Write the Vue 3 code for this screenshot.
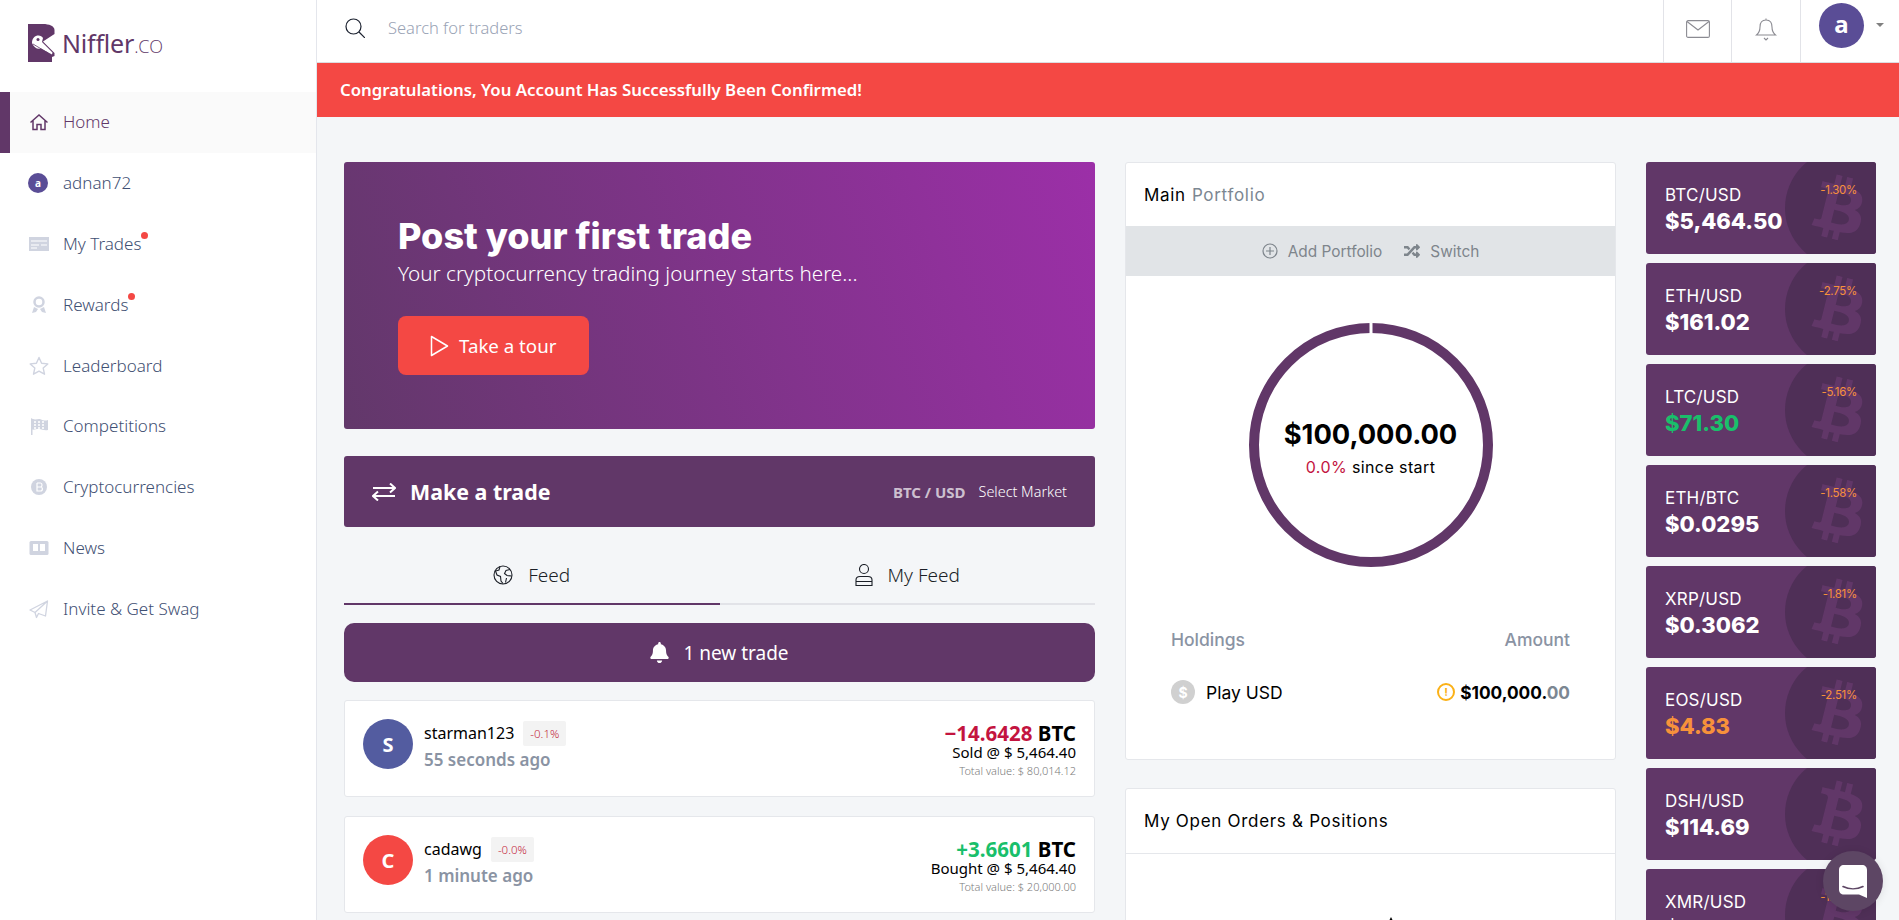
<template>
  <div class="page">
    <aside class="sidebar">
      <div class="logo">
        <svg class="logo-mark" viewBox="0 0 27 38" width="27" height="38">
          <path fill="#613768" d="M0 0H15C21 0 26.500 2 26.500 6V10L15 17.500L26.500 29V32L24 33V38H0Z" />
          <path fill="#fff" d="M4 19C4 14 7 11.500 10.500 11.500C12.500 11.500 14 12.500 15 14L14 18L24.500 28.500L24 30.500L13 24.500C9 25.500 6 23.500 4 19Z" />
          <circle cx="10" cy="15.500" r="1.500" fill="#613768" />
          <path stroke="#613768" stroke-width="0.800" fill="none" d="M5 20L20 29" />
        </svg>
        <span class="logo-name">Niffler<span class="logo-co">.CO</span></span>
      </div>
      <nav class="nav">
        <a v-for="item in nav" :key="item.label" class="nav-item" :class="{ active: item.active }">
          <span class="nav-icon">
            <span v-if="item.icon === 'avatar'" class="nav-avatar">a</span>
            <svg v-else viewBox="0 0 20 20" width="20" height="20" v-html="navIcons[item.icon]"></svg>
          </span>
          <span class="nav-label">{{ item.label }}<i v-if="item.dot" class="dot"></i></span>
        </a>
      </nav>
    </aside>

    <div class="main">
      <header class="topbar">
        <svg class="search-icon" viewBox="0 0 20 20" width="20" height="20" fill="none" stroke="#1c2230" stroke-width="1.200">
          <circle cx="8.500" cy="8.500" r="7.500" />
          <path d="M14 14L20 20" />
        </svg>
        <span class="search-text">Search for traders</span>
        <div class="top-cell">
          <svg viewBox="0 0 24 18" width="24" height="18" fill="none" stroke="#8b8b92" stroke-width="1.100">
            <rect x="0.600" y="0.600" width="22.800" height="16.800" rx="1.500" />
            <path d="M1 1.500L12 10L23 1.500" />
          </svg>
        </div>
        <div class="top-cell wide">
          <svg viewBox="0 0 22 24" width="22" height="24" fill="none" stroke="#8b8b92" stroke-width="1.100">
            <path d="M11 1.500V3M11 3C6.500 3 5 6.500 5 10C5 14 4 16 1.500 18H20.500C18 16 17 14 17 10C17 6.500 15.500 3 11 3Z" />
            <path d="M9 21L11 23L13 21" />
          </svg>
        </div>
        <div class="top-user">
          <span class="top-avatar">a</span>
          <i class="caret"></i>
        </div>
      </header>
      <div class="alert">Congratulations, You Account Has Successfully Been Confirmed!</div>

      <div class="content">
        <section class="col-feed">
          <div class="hero">
            <h1>Post your first trade</h1>
            <p>Your cryptocurrency trading journey starts here...</p>
            <button class="tour-btn">
              <svg viewBox="0 0 19 22" width="19" height="22" fill="none" stroke="#fff" stroke-width="1.500" stroke-linejoin="round">
                <path d="M1.500 1.500L17.500 11L1.500 20.500Z" />
              </svg>
              Take a tour
            </button>
          </div>

          <div class="trade-bar">
            <svg viewBox="0 0 24 18" width="24" height="18" fill="none" stroke="#fff" stroke-width="2">
              <path d="M1 5H23M18 0.500L23 5L18 9.500" />
              <path d="M23 13H1M6 8.500L1 13L6 17.500" />
            </svg>
            <span class="trade-title">Make a trade</span>
            <span class="trade-pair">BTC / USD</span>
            <span class="trade-select">Select Market</span>
          </div>

          <div class="tabs">
            <div class="tab active">
              <svg viewBox="0 0 20 20" width="20" height="20" fill="none" stroke="#1b1f27" stroke-width="1.100">
                <circle cx="10" cy="10" r="9" />
                <path d="M7 1.500L6 5L2.500 6L4 10L7.500 11.500L8 16L10 18.500M17 4.500L13 5.500L11.500 8.500L14 10.500L18.500 11M13.500 13L12.500 17.500" />
              </svg>
              Feed
            </div>
            <div class="tab">
              <svg viewBox="0 0 18 22" width="18" height="22" fill="none" stroke="#1b1f27" stroke-width="1.100">
                <circle cx="9" cy="5" r="4.500" />
                <path d="M1 21.500V16C1 13.500 2.500 12.500 5 12.500H13C15.500 12.500 17 13.500 17 16V21.500ZM1 17.500H17" />
              </svg>
              My Feed
            </div>
          </div>

          <button class="new-trade">
            <svg viewBox="0 0 448 512" width="19" height="21" fill="#fff">
              <path d="M224 512c35.300 0 64-28.700 64-64H160c0 35.300 28.700 64 64 64zm215.400-149.700c-19.300-20.800-55.500-52-55.500-154.300 0-77.700-54.500-139.900-127.900-155.200V32c0-17.700-14.300-32-32-32s-32 14.300-32 32v20.800C118.600 68.100 64.100 130.300 64.100 208c0 102.300-36.200 133.500-55.500 154.300-6 6.400-8.600 14.100-8.600 21.700 .1 16.400 13 32 32.100 32h383.800c19.100 0 32-15.600 32.100-32 .1-7.600-2.600-15.300-8.600-21.700z" />
            </svg>
            1 new trade
          </button>

          <article v-for="t in trades" :key="t.user" class="trade-card">
            <span class="trade-avatar" :class="t.tone">{{ t.initial }}</span>
            <div class="trade-who">
              <div class="trade-user">
                <span>{{ t.user }}</span>
                <span class="trade-change">{{ t.change }}</span>
              </div>
              <div class="trade-time">{{ t.time }}</div>
            </div>
            <div class="trade-values">
              <div class="trade-amount"><span :class="t.side">{{ t.amount }}</span> BTC</div>
              <div class="trade-price">{{ t.action }} @ $ 5,464.40</div>
              <div class="trade-total">Total value: $ {{ t.total }}</div>
            </div>
          </article>
        </section>

        <section class="col-portfolio">
          <div class="card">
            <div class="card-title">Main <span class="muted">Portfolio</span></div>
            <div class="card-band">
              <span class="band-link">
                <svg viewBox="0 0 16 16" width="16" height="16" fill="none" stroke="#7e858c" stroke-width="1.200">
                  <circle cx="8" cy="8" r="7" />
                  <path d="M8 4V12M4 8H12" />
                </svg>
                Add Portfolio
              </span>
              <span class="band-link">
                <svg viewBox="0 0 512 512" width="16" height="16" fill="#7e858c">
                  <path d="M504.971 359.029c9.373 9.373 9.373 24.569 0 33.941l-80 79.984c-15.010 15.010-40.971 4.490-40.971-16.971V416h-58.785a12.004 12.004 0 0 1-8.773-3.812l-70.556-75.596 53.333-57.143L352 336h32v-39.981c0-21.438 25.943-31.998 40.971-16.971l80 79.981zM12 176h84l52.781 56.551 53.333-57.143-70.556-75.596A11.999 11.999 0 0 0 122.785 96H12c-6.627 0-12 5.373-12 12v56c0 6.627 5.373 12 12 12zm372 0v39.984c0 21.460 25.961 31.980 40.971 16.971l80-79.984c9.373-9.373 9.373-24.569 0-33.941l-80-79.981C409.943 24.021 384 34.582 384 56.019V96h-58.785a12.004 12.004 0 0 0-8.773 3.812L96 336H12c-6.627 0-12 5.373-12 12v56c0 6.627 5.373 12 12 12h110.785c3.326 0 6.503-1.381 8.773-3.812L352 176h32z" />
                </svg>
                Switch
              </span>
            </div>

            <div class="ring-wrap">
              <svg class="ring" viewBox="0 0 244 244" width="244" height="244">
                <circle cx="122" cy="122" r="117" fill="none" stroke="#613768" stroke-width="10" />
                <rect x="120.500" y="0" width="3" height="12" fill="#fff" />
              </svg>
              <div class="ring-text">
                <div class="ring-value">$100,000.00</div>
                <div class="ring-sub"><span class="loss">0.0%</span> since start</div>
              </div>
            </div>

            <div class="holdings">
              <div class="holdings-head"><span>Holdings</span><span>Amount</span></div>
              <div class="holdings-row">
                <span class="coin">$</span>
                <span class="holdings-name">Play USD</span>
                <span class="warn">!</span>
                <span class="holdings-amount">$100,000.<span class="muted">00</span></span>
              </div>
            </div>
          </div>

          <div class="card">
            <div class="card-title bordered">My Open Orders &amp; Positions</div>
            <div class="card-empty">
              <svg viewBox="0 0 10 10" width="10" height="10" fill="#000"><path d="M5 0L10 10H0Z" /></svg>
            </div>
          </div>
        </section>

        <section class="col-tickers">
          <div v-for="c in tickers" :key="c.pair" class="ticker">
            <span class="ticker-circle"></span>
            <svg class="ticker-btc" viewBox="0 0 384 512" width="48" height="64" fill="#613768">
              <path d="M310.204 242.638c27.730-14.180 45.377-39.390 41.280-81.300-5.358-57.351-52.458-76.573-114.850-81.929V0h-48.528v77.203c-12.605 0-25.525.315-38.444.63V0h-48.528v79.409c-17.842.539-38.622.276-97.370 0v51.678c38.314-.678 58.417-3.140 63.023 21.427v217.429c-2.925 19.492-18.524 16.685-53.255 16.071L3.765 443.680c88.481 0 97.370.315 97.370.315V512h48.528v-67.060c13.234.315 26.154.315 38.444.315V512h48.528v-68.005c81.299-4.412 135.647-24.894 142.895-101.467 5.671-61.446-23.320-88.862-69.326-99.890zM150.608 134.553c27.415 0 113.126-8.507 113.126 48.528 0 54.515-85.710 48.212-113.126 48.212v-96.740zm0 251.776V279.821c32.772 0 133.127-9.138 133.127 53.255-.001 60.200-100.355 53.253-133.127 53.253z" />
            </svg>
            <span v-if="c.pct" class="ticker-pct">{{ c.pct }}</span>
            <div class="ticker-pair">{{ c.pair }}</div>
            <div class="ticker-price" :class="c.tone">{{ c.price }}</div>
          </div>
        </section>
      </div>
    </div>

    <button class="chat">
      <svg viewBox="0 0 28 33" width="28" height="33">
        <path fill="#fff" d="M5 0H23C26 0 28 2 28 5V33L20 29.500H5C2 29.500 0 27.500 0 24.500V5C0 2 2 0 5 0Z" />
        <path fill="none" stroke="#5d4664" stroke-width="1.600" stroke-linecap="round" d="M4 21.500C10 24.500 18 24.500 24 21.500" />
      </svg>
    </button>
  </div>
</template>

<script setup>
const navIcons = {
  home: '<path fill="none" stroke="#613768" stroke-width="1.500" d="M1.500 10.500L10 3L18.500 10.500M4 8.500V17.500H8V12.500H12V17.500H16V8.500" />',
  trades: '<rect x="0" y="3" width="20" height="14" fill="#d0d4e0" /><path stroke="#fff" stroke-width="1.200" d="M2 7H18M2 11H10M12 11H18M2 14H8" />',
  rewards: '<circle cx="10" cy="7" r="4.500" fill="none" stroke="#d0d4e0" stroke-width="2.500" /><path fill="#d0d4e0" d="M5 12L3 18L7 17L9 14ZM15 12L17 18L13 17L11 14Z" />',
  star: '<path fill="none" stroke="#d0d4e0" stroke-width="1.400" stroke-linejoin="round" d="M10 1.500L12.600 7.200L18.800 7.900L14.200 12.100L15.500 18.200L10 15.100L4.500 18.200L5.800 12.100L1.200 7.900L7.400 7.200Z" />',
  flag: '<path fill="#d0d4e0" d="M2 2C6 5 9 2 12 3.500C14 4.500 16 5 19 4V14C15 15 13 13 10 13C7 13 5 14 3.500 13.500V19H2Z" /><path stroke="#fff" stroke-width="1.500" stroke-dasharray="2 2" d="M5 6H17M5 9H17M5 12H17" />',
  coin: '<circle cx="10" cy="10" r="8" fill="#d0d4e0" /><path stroke="#fff" stroke-width="1.200" fill="none" d="M8 6H11.500C13.500 6 13.500 10 11.500 10H8M11.500 10C14 10 14 14 11.500 14H8V6" />',
  news: '<rect x="0.500" y="3" width="19" height="14" rx="1.500" fill="#d0d4e0" /><rect x="4" y="6" width="5" height="7" fill="#fff" /><rect x="11" y="6" width="5" height="7" fill="#fff" />',
  plane: '<path fill="none" stroke="#d0d4e0" stroke-width="1.300" stroke-linejoin="round" d="M18.500 2L1 11L6 13.500L18.500 2ZM18.500 2L16.500 17L9.500 14.500L7.500 18.500L6 13.500" />',
};

const nav = [
  { label: "Home", icon: "home", active: true },
  { label: "adnan72", icon: "avatar" },
  { label: "My Trades", icon: "trades", dot: true },
  { label: "Rewards", icon: "rewards", dot: true },
  { label: "Leaderboard", icon: "star" },
  { label: "Competitions", icon: "flag" },
  { label: "Cryptocurrencies", icon: "coin" },
  { label: "News", icon: "news" },
  { label: "Invite & Get Swag", icon: "plane" },
];

const trades = [
  { user: "starman123", initial: "S", tone: "blue", change: "-0.1%", time: "55 seconds ago", amount: "−14.6428", side: "loss", action: "Sold", total: "80,014.12" },
  { user: "cadawg", initial: "C", tone: "red", change: "-0.0%", time: "1 minute ago", amount: "+3.6601", side: "gain", action: "Bought", total: "20,000.00" },
];

const tickers = [
  { pair: "BTC/USD", price: "$5,464.50", pct: "-1.30%" },
  { pair: "ETH/USD", price: "$161.02", pct: "-2.75%" },
  { pair: "LTC/USD", price: "$71.30", pct: "-5.16%", tone: "gain" },
  { pair: "ETH/BTC", price: "$0.0295", pct: "-1.58%" },
  { pair: "XRP/USD", price: "$0.3062", pct: "-1.81%" },
  { pair: "EOS/USD", price: "$4.83", pct: "-2.51%", tone: "warm" },
  { pair: "DSH/USD", price: "$114.69" },
  { pair: "XMR/USD", price: "$66.307", pct: "-1.60%" },
];
</script>

<style>
html,
body {
  margin: 0;
  height: 100%;
  overflow: hidden;
}
</style>

<style scoped>
.page {
  display: flex;
  height: 920px;
  overflow: hidden;
  background: #f4f6f8;
  font-family: "Noto Sans", sans-serif;
  color: #000;
}

.sidebar {
  width: 316px;
  flex: none;
  background: #fff;
  border-right: 1px solid #e4e6ec;
}

.logo {
  display: flex;
  align-items: center;
  gap: 7px;
  height: 92px;
  padding: 0 0 6px 28px;
  box-sizing: border-box;
}

.logo-name {
  font-size: 25px;
  color: #613768;
  letter-spacing: -0.2px;
}

.logo-co {
  font-size: 18px;
  font-weight: 300;
  font-family: "Open Sans", sans-serif;
}

.nav-item {
  display: flex;
  align-items: center;
  height: 60.800px;
  padding-left: 28px;
  color: #3f5073;
  font-size: 17px;
  font-weight: 300;
  box-sizing: border-box;
}

.nav-item.active {
  background: #fafafa;
  border-left: 10px solid #613768;
  padding-left: 18px;
  color: #613768;
}

.nav-icon {
  width: 34px;
  display: flex;
  padding-left: 1px;
}

.nav-avatar {
  width: 20px;
  height: 20px;
  border-radius: 50%;
  background: #5a4d96;
  color: #fff;
  font-size: 10px;
  font-weight: 700;
  display: flex;
  align-items: center;
  justify-content: center;
  margin-left: -1px;
}

.nav-label {
  position: relative;
  margin-top: -1px;
}

.dot {
  position: absolute;
  right: -7px;
  top: 0;
  width: 7px;
  height: 7px;
  border-radius: 50%;
  background: #f44844;
}

.main {
  flex: 1;
  min-width: 0;
}

.topbar {
  display: flex;
  align-items: center;
  height: 62px;
  background: #fff;
  border-bottom: 1px solid #dcdde0;
  padding-left: 28px;
}

.search-icon {
  flex: none;
  margin-bottom: 6px;
}

.search-text {
  flex: 1;
  margin: 0 0 8px 23px;
  font-size: 16.500px;
  color: #9aa3b5;
  font-weight: 300;
}

.top-cell {
  width: 68px;
  height: 62px;
  border-left: 1px solid #e2e3e8;
  display: flex;
  align-items: center;
  justify-content: center;
  padding-bottom: 4px;
  box-sizing: border-box;
}

.top-cell.wide {
  width: 69px;
}

.top-user {
  width: 99px;
  height: 62px;
  border-left: 1px solid #e2e3e8;
  display: flex;
  align-items: center;
  padding-left: 18px;
  padding-bottom: 12px;
  box-sizing: border-box;
}

.top-avatar {
  width: 45px;
  height: 45px;
  border-radius: 50%;
  background: #5a4d96;
  color: #fff;
  font-size: 24px;
  font-weight: 700;
  display: flex;
  align-items: center;
  justify-content: center;
  padding-bottom: 3px;
  box-sizing: border-box;
}

.caret {
  margin-left: 12px;
  border-left: 4px solid transparent;
  border-right: 4px solid transparent;
  border-top: 4px solid #808080;
}

.alert {
  height: 54px;
  background: #f44844;
  color: #fff;
  font-size: 16.800px;
  font-weight: 600;
  display: flex;
  align-items: center;
  padding: 0 0 2px 23px;
  box-sizing: border-box;
}

.content {
  display: flex;
  gap: 30px;
  padding: 45px 23px 0 27px;
  align-items: flex-start;
}

.col-feed {
  width: 751px;
  flex: none;
  display: flex;
  flex-direction: column;
}

.hero {
  height: 267px;
  border-radius: 3px;
  background: linear-gradient(70deg, #62386a 0%, #9c2fa8 100%);
  padding: 55px 0 0 54px;
  box-sizing: border-box;
  color: #fff;
}

.hero h1 {
  margin: 0;
  font-family: Inter, sans-serif;
  font-size: 36px;
  font-weight: 800;
  line-height: 38px;
}

.hero p {
  margin: 0;
  font-size: 20.700px;
  font-weight: 300;
  line-height: 36px;
}

.tour-btn {
  display: flex;
  align-items: center;
  gap: 10px;
  margin-top: 25px;
  width: 191px;
  height: 59px;
  padding: 0 0 0 32px;
  border: 0;
  border-radius: 8px;
  background: #f44844;
  color: #fff;
  font-family: inherit;
  font-size: 18.700px;
}

.trade-bar {
  display: flex;
  align-items: center;
  height: 71px;
  margin-top: 27px;
  padding: 0 28px 0 28px;
  background: #613768;
  border-radius: 3px;
  color: #fff;
}

.trade-title {
  flex: 1;
  margin-left: 14px;
  font-size: 21.400px;
  font-weight: 700;
}

.trade-pair {
  font-size: 15px;
  font-weight: 700;
  color: rgba(255, 255, 255, 0.7);
  margin-right: 13px;
}

.trade-select {
  font-size: 14.400px;
  font-weight: 300;
}

.tabs {
  display: flex;
  height: 78px;
}

.tab {
  flex: 1;
  display: flex;
  align-items: center;
  justify-content: center;
  gap: 15px;
  padding-top: 20px;
  font-size: 19px;
  font-weight: 300;
  color: #1b1f27;
  border-bottom: 2px solid #e2e3e8;
  box-sizing: border-box;
}

.tab.active {
  border-bottom-color: #613768;
}

.new-trade {
  display: flex;
  align-items: center;
  justify-content: center;
  gap: 14px;
  height: 59px;
  margin-top: 18px;
  border: 0;
  border-radius: 10px;
  background: #613768;
  color: #fff;
  font-family: inherit;
  font-size: 19px;
}

.trade-card {
  display: flex;
  align-items: center;
  height: 97px;
  margin-top: 18px;
  padding: 0 18px 0 18px;
  background: #fff;
  border: 1px solid #e5e7eb;
  border-radius: 3px;
  box-sizing: border-box;
}

.trade-card + .trade-card {
  margin-top: 19px;
}

.trade-avatar {
  width: 50px;
  height: 50px;
  flex: none;
  border-radius: 50%;
  margin-bottom: 9px;
  color: #fff;
  font-size: 20px;
  font-weight: 700;
  display: flex;
  align-items: center;
  justify-content: center;
}

.trade-avatar.blue {
  background: #535ca0;
}

.trade-avatar.red {
  background: #f44844;
}

.trade-who {
  flex: 1;
  margin: 0 0 6px 11px;
}

.trade-user {
  display: flex;
  align-items: center;
  gap: 9px;
  font-size: 16px;
}

.trade-change {
  background: #f3f3f3;
  color: #c4293d;
  font-size: 11.500px;
  font-weight: 300;
  height: 25px;
  line-height: 25px;
  padding: 0 7px;
  border-radius: 2px;
}

.trade-time {
  margin-top: 2px;
  font-size: 17px;
  font-weight: 600;
  color: #8a93a3;
}

.trade-values {
  text-align: right;
  margin-top: 5px;
}

.trade-amount {
  font-size: 20.500px;
  font-weight: 700;
  line-height: 20px;
}

.trade-price {
  font-size: 15px;
  line-height: 18px;
}

.trade-total {
  font-size: 11px;
  font-weight: 300;
  color: #7b7b7b;
  line-height: 19px;
}

.loss {
  color: #c3143f;
}

.gain {
  color: #19bf6b;
}

.warm {
  color: #f7913b;
}

.muted {
  color: #7c8792;
}

.col-portfolio {
  width: 491px;
  flex: none;
  display: flex;
  flex-direction: column;
  gap: 28px;
  font-family: Inter, sans-serif;
}

.card {
  background: #fff;
  border: 1px solid #e5e7eb;
  border-radius: 3px;
  box-sizing: border-box;
}

.card-title {
  height: 63px;
  display: flex;
  align-items: center;
  gap: 6px;
  padding-left: 18px;
  font-size: 17px;
  letter-spacing: 0.700px;
}

.card-title.bordered {
  height: 64px;
  border-bottom: 1px solid #e5e7eb;
}

.card-band {
  display: flex;
  align-items: center;
  justify-content: center;
  gap: 22px;
  height: 50px;
  background: #e1e4e7;
  font-size: 15.400px;
  color: #7e858c;
}

.band-link {
  display: flex;
  align-items: center;
  gap: 10px;
}

.ring-wrap {
  position: relative;
  width: 244px;
  height: 244px;
  margin: 47px auto 0;
}

.ring {
  display: block;
}

.ring-text {
  position: absolute;
  inset: 0;
  display: flex;
  flex-direction: column;
  align-items: center;
  justify-content: center;
  padding-top: 5px;
}

.ring-value {
  font-size: 27.300px;
  font-weight: 700;
}

.ring-sub {
  margin-top: 6px;
  font-size: 16px;
  letter-spacing: 0.400px;
}

.holdings {
  padding: 62px 45px 55px 45px;
}

.holdings-head {
  display: flex;
  justify-content: space-between;
  font-size: 17.500px;
  font-weight: 500;
  color: #8a93a3;
}

.holdings-row {
  display: flex;
  align-items: center;
  margin-top: 30px;
}

.coin {
  width: 24px;
  height: 24px;
  border-radius: 50%;
  background: #d0d0d0;
  color: #fff;
  font-size: 14px;
  font-weight: 700;
  display: flex;
  align-items: center;
  justify-content: center;
}

.holdings-name {
  flex: 1;
  margin-left: 11px;
  font-size: 17.500px;
}

.warn {
  width: 14px;
  height: 14px;
  border: 2px solid #fbb117;
  border-radius: 50%;
  color: #fbb117;
  font-size: 11px;
  font-weight: 700;
  display: flex;
  align-items: center;
  justify-content: center;
  margin-right: 5px;
}

.holdings-amount {
  font-size: 17.300px;
  font-weight: 700;
}

.card-empty {
  display: flex;
  justify-content: center;
  height: 200px;
  padding: 63px 0 0 40px;
  box-sizing: border-box;
}

.col-tickers {
  width: 230px;
  flex: none;
  display: flex;
  flex-direction: column;
  gap: 9px;
  font-family: Inter, sans-serif;
}

.ticker {
  position: relative;
  overflow: hidden;
  height: 92px;
  flex: none;
  padding: 21px 0 0 19px;
  background: #613768;
  border-radius: 3px;
  color: #fff;
  box-sizing: border-box;
}

.ticker-circle {
  position: absolute;
  left: 139px;
  top: -13px;
  width: 118px;
  height: 118px;
  border-radius: 50%;
  background: #4f2f57;
}

.ticker-btc {
  position: absolute;
  left: 170px;
  top: 14px;
  transform: rotate(14deg);
}

.ticker-pct {
  position: absolute;
  right: 19px;
  top: 21px;
  font-size: 11.500px;
  letter-spacing: -0.300px;
  color: #f7913b;
}

.ticker-pair {
  position: relative;
  font-size: 17px;
  letter-spacing: 0.200px;
  line-height: 24px;
}

.ticker-price {
  position: relative;
  font-size: 22px;
  font-weight: 800;
  line-height: 28px;
}

.chat {
  position: fixed;
  left: 1823px;
  top: 851px;
  width: 60px;
  height: 60px;
  padding: 0;
  border: 0;
  border-radius: 50%;
  background: #5d4664;
  box-shadow: 0 1px 8px rgba(0, 0, 0, 0.1);
  display: flex;
  align-items: center;
  justify-content: center;
}
</style>
